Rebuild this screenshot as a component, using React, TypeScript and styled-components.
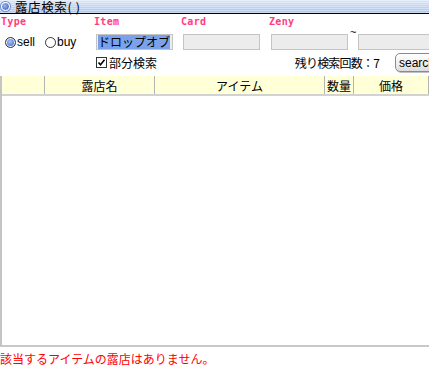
import React from "react";
import styled, { createGlobalStyle } from "styled-components";

const Global = createGlobalStyle`
  html, body { margin: 0; padding: 0; background: #ffffff; }
  body { width: 429px; height: 370px; overflow: hidden; font-family: "Liberation Sans", "Noto Sans CJK JP", sans-serif; font-size: 12px; color: #000; }
`;

const Window = styled.div`
  width: 429px;
  height: 370px;
  display: flex;
  flex-direction: column;
  background: #ffffff;
  overflow: hidden;
`;

const TitleBar = styled.div`
  height: 13px;
  border-bottom: 1px solid #000;
  display: flex;
  align-items: center;
  gap: 4px;
  padding-left: 1px;
  background:
    repeating-linear-gradient(to bottom, rgba(255,255,255,0.35) 0 1px, rgba(255,255,255,0) 1px 2px),
    linear-gradient(to bottom, #dde7f7 0%, #c3d5f1 45%, #aec6ee 100%);
`;

const TitleIcon = styled.span`
  width: 7px;
  height: 7px;
  border-radius: 50%;
  border: 1px solid #ffffff;
  background: radial-gradient(circle at 40% 40%, #9fb8e8 0%, #4d72c4 70%);
  box-shadow: 0 0 0 1px #6f8fcf;
  flex-shrink: 0;
`;

const TitleText = styled.span`
  font-family: "Noto Sans CJK JP", sans-serif;
  font-size: 12.5px;
  line-height: 13px;
  color: #000;
  margin-left: 1px;
  letter-spacing: 0.6px;
  white-space: nowrap;
`;

const Form = styled.div`
  display: grid;
  grid-template-columns: 93px 87px 88px minmax(0, 1fr);
  grid-template-rows: 12px 22px 23px;
  padding: 2px 0 0 1px;
`;

const Label = styled.div`
  font-family: "DejaVu Sans Mono", monospace;
  font-weight: bold;
  font-size: 10px;
  letter-spacing: 0.3px;
  color: #ff3c82;
  line-height: 12px;
`;

const Cell = styled.div`
  display: flex;
  align-items: flex-end;
  padding-left: 2px;
  min-width: 0;
`;

const RadioGroup = styled.div`
  display: flex;
  align-items: center;
  gap: 10px;
  padding-left: 4px;
  height: 16px;
  align-self: end;
`;

const RadioLabel = styled.label`
  display: flex;
  align-items: center;
  gap: 1px;
  font-family: "Liberation Sans", sans-serif;
  font-size: 12px;
`;

const RadioDot = styled.span<{ $on?: boolean }>`
  width: 9px;
  height: 9px;
  border-radius: 50%;
  border: 1px solid #333;
  background: ${(p) => (p.$on ? "radial-gradient(circle at 45% 40%, #a9c4f5 0%, #3e6fd1 75%)" : "#fff")};
  box-shadow: ${(p) => (p.$on ? "inset 0 0 0 1px #fff" : "none")};
`;

const Input = styled.div<{ $w: number }>`
  width: ${(p) => p.$w}px;
  height: 14px;
  border: 1px solid #c4c4c4;
  background: #ececec;
  display: flex;
  align-items: center;
  padding-left: 1px;
  flex-shrink: 0;
`;

const Selected = styled.span`
  background: #7aa2ea;
  color: #000;
  font-family: "Noto Sans CJK JP", sans-serif;
  font-size: 12px;
  line-height: 14px;
`;

const Tilde = styled.span`
  font-size: 11px;
  margin: 0 2px 0 2px;
  align-self: flex-start;
  line-height: 8px;
`;

const OptionRow = styled.div`
  grid-column: 2 / 5;
  display: flex;
  align-items: center;
  padding-left: 2px;
  padding-top: 2px;
  min-width: 0;
`;

const CheckBox = styled.span`
  width: 9px;
  height: 9px;
  border: 1px solid #333;
  background: #fff;
  display: flex;
  align-items: center;
  justify-content: center;
  margin-right: 2px;
`;

const JText = styled.span<{ $color?: string }>`
  font-family: "Noto Sans CJK JP", sans-serif;
  font-size: 12px;
  color: ${(p) => p.$color ?? "#000"};
`;

const Remain = styled(JText)`
  margin-left: auto;
  margin-right: 16px;
  letter-spacing: -0.8px;
  white-space: nowrap;
`;

const SearchButton = styled.div`
  width: 43px;
  height: 17px;
  border: 1px solid #8a8a8a;
  border-radius: 5px;
  background: linear-gradient(to bottom, #ffffff, #eeeeee 60%, #dcdcdc);
  display: flex;
  align-items: center;
  padding-left: 3px;
  font-family: "Liberation Sans", sans-serif;
  font-size: 12px;
  margin-right: -14px;
  box-shadow: 1px 1px 0 #c0c0c0;
  flex-shrink: 0;
  white-space: nowrap;
`;

const Table = styled.div`
  margin-top: 3px;
  width: 450px;
  height: 269px;
  border-left: 2px solid #c4c4c4;
  border-bottom: 2px solid #c8c8c8;
  display: flex;
  flex-direction: column;
`;

const HeaderRow = styled.div`
  display: grid;
  grid-template-columns: 43px 110px 170px 29px 75px 1fr;
  height: 18px;
  background: #ffffd8;
  border-bottom: 2px solid #d2d2d2;
`;

const HeaderCell = styled.div`
  display: flex;
  align-items: center;
  justify-content: center;
  border-right: 1px solid #b4b4b4;
  font-family: "Noto Sans CJK JP", sans-serif;
  font-size: 12px;
  &:last-child { border-right: none; }
`;

const Body = styled.div`
  flex: 1;
  background: #fff;
`;

const Message = styled.div`
  padding-top: 5px;
  font-family: "Noto Sans CJK JP", sans-serif;
  font-size: 12px;
  color: #ff0000;
  line-height: 14px;
`;

export default function App() {
  return (
    <>
      <Global />
      <Window>
        <TitleBar>
          <TitleIcon />
          <TitleText>露店検索( )</TitleText>
        </TitleBar>
        <Form>
          <Label>Type</Label>
          <Label>Item</Label>
          <Label>Card</Label>
          <Label>Zeny</Label>

          <RadioGroup>
            <RadioLabel><RadioDot $on />sell</RadioLabel>
            <RadioLabel><RadioDot />buy</RadioLabel>
          </RadioGroup>
          <Cell>
            <Input $w={74}><Selected>ドロップオブ</Selected></Input>
          </Cell>
          <Cell>
            <Input $w={74} />
          </Cell>
          <Cell>
            <Input $w={74} />
            <Tilde>~</Tilde>
            <Input $w={74} />
          </Cell>

          <OptionRow>
            <CheckBox>
              <svg width="9" height="9" viewBox="0 0 9 9">
                <path d="M1.5 4.5 L3.5 6.8 L7.5 1.8" stroke="#000" strokeWidth="1.6" fill="none" />
              </svg>
            </CheckBox>
            <JText>部分検索</JText>
            <Remain>残り検索回数：7</Remain>
            <SearchButton>search</SearchButton>
          </OptionRow>
        </Form>
        <Table>
          <HeaderRow>
            <HeaderCell />
            <HeaderCell>露店名</HeaderCell>
            <HeaderCell>アイテム</HeaderCell>
            <HeaderCell>数量</HeaderCell>
            <HeaderCell>価格</HeaderCell>
            <HeaderCell />
          </HeaderRow>
          <Body />
        </Table>
        <Message>該当するアイテムの露店はありません。</Message>
      </Window>
    </>
  );
}
